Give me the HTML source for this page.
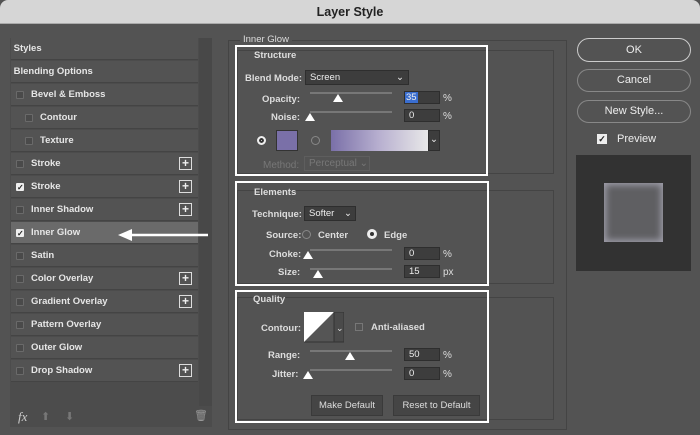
<!DOCTYPE html><html><head><style>
*{margin:0;padding:0;box-sizing:border-box}
body{width:700px;height:435px;background:#535353;font-family:"Liberation Sans",sans-serif;color:#e8e8e8;font-size:10px;position:relative;overflow:hidden}
.a{position:absolute}
.title{left:0;top:0;width:700px;height:24px;background:#d6d6d6;border-radius:8px 8px 0 0;color:#222;font-weight:bold;font-size:12.5px;text-align:center;line-height:24px;border-bottom:1px solid #aaa}
.list{left:10px;top:38px;width:202px;height:389px;background:#4c4c4c}
.item{position:absolute;left:1px;width:187px;height:22px;border-bottom:1px solid #444;background:#535353;line-height:22px;font-size:9.5px;font-weight:bold;color:#e6e6e6}
.cb{position:absolute;width:8px;height:8px;border:1px solid #6a6a6a;background:#4a4a4a;border-radius:1px;top:7px}
.cbc{background:#eee;border-color:#eee}
.cbc:after{content:"✓";position:absolute;left:0;top:-7px;font-size:8px;color:#222;font-weight:bold}
.plus{position:absolute;right:6px;top:4px;width:13px;height:13px;border:1px solid #ddd;color:#eee;font-size:12px;line-height:10px;text-align:center}
.grp{border:1px solid #444}
.wb{border:2px solid #fff}
.lbl{font-size:9.5px;color:#ddd;font-weight:bold}
.fld{background:#3d3d3d;border:1px solid #2e2e2e;color:#eee;font-size:9.5px;padding-left:4px;line-height:12px}
.trk{height:2px;background:#777}
.th{width:0;height:0;border-left:5px solid transparent;border-right:5px solid transparent;border-bottom:8px solid #fff}
.btn{border:1px solid #aaa;border-radius:12px;text-align:center;color:#eee;font-size:11px}
.pbtn{background:#454545;border:1px solid #3a3a3a;text-align:center;font-size:9.5px;color:#ddd;line-height:20px}
</style></head><body>
<div class="a title">Layer Style</div>
<div class="a list">
<div class="item" style="top:0">&nbsp;Styles</div>
<div class="item" style="top:23px">&nbsp;Blending Options</div>
<div class="item" style="top:46px"><span class="cb" style="left:5px"></span><span style="margin-left:20px">Bevel &amp; Emboss</span></div>
<div class="item" style="top:69px"><span class="cb" style="left:14px"></span><span style="margin-left:29px">Contour</span></div>
<div class="item" style="top:92px"><span class="cb" style="left:14px"></span><span style="margin-left:29px">Texture</span></div>
<div class="item" style="top:115px"><span class="cb" style="left:5px"></span><span style="margin-left:20px">Stroke</span><span class="plus">+</span></div>
<div class="item" style="top:138px"><span class="cb cbc" style="left:5px"></span><span style="margin-left:20px">Stroke</span><span class="plus">+</span></div>
<div class="item" style="top:161px"><span class="cb" style="left:5px"></span><span style="margin-left:20px">Inner Shadow</span><span class="plus">+</span></div>
<div class="item" style="top:184px;background:#6a6a6a"><span class="cb cbc" style="left:5px"></span><span style="margin-left:20px">Inner Glow</span></div>
<div class="item" style="top:207px"><span class="cb" style="left:5px"></span><span style="margin-left:20px">Satin</span></div>
<div class="item" style="top:230px"><span class="cb" style="left:5px"></span><span style="margin-left:20px">Color Overlay</span><span class="plus">+</span></div>
<div class="item" style="top:253px"><span class="cb" style="left:5px"></span><span style="margin-left:20px">Gradient Overlay</span><span class="plus">+</span></div>
<div class="item" style="top:276px"><span class="cb" style="left:5px"></span><span style="margin-left:20px">Pattern Overlay</span></div>
<div class="item" style="top:299px"><span class="cb" style="left:5px"></span><span style="margin-left:20px">Outer Glow</span></div>
<div class="item" style="top:322px"><span class="cb" style="left:5px"></span><span style="margin-left:20px">Drop Shadow</span><span class="plus">+</span></div>
<div class="a" style="left:189px;top:0;width:13px;height:368px;background:#484848"></div>
<div class="a" style="left:8px;top:371px;font-style:italic;font-family:'Liberation Serif',serif;font-size:13px;color:#ccc">fx</div>
<div class="a" style="left:31px;top:372px;color:#777;font-size:11px">⬆</div>
<div class="a" style="left:55px;top:372px;color:#777;font-size:11px">⬇</div>
<div class="a" style="left:184px;top:371px;color:#999;font-size:11px">🗑</div>
</div>
<svg class="a" style="left:118px;top:228px" width="92" height="14"><line x1="10" y1="7" x2="90" y2="7" stroke="#fff" stroke-width="2.5"/><polygon points="0,7 14,1 14,13" fill="#fff"/></svg>
<div class="a grp" style="left:228px;top:40px;width:339px;height:390px"></div>
<div class="a lbl" style="left:240px;top:34px;background:#535353;padding:0 3px;font-weight:normal">Inner Glow</div>
<div class="a grp" style="left:237px;top:50px;width:317px;height:124px"></div>
<div class="a grp" style="left:237px;top:190px;width:317px;height:94px"></div>
<div class="a grp" style="left:237px;top:297px;width:317px;height:123px"></div>
<div class="a wb" style="left:235px;top:45px;width:253px;height:131px"></div>
<div class="a wb" style="left:235px;top:181px;width:254px;height:105px"></div>
<div class="a wb" style="left:235px;top:290px;width:254px;height:133px"></div>
<div class="a lbl" style="left:254px;top:50px">Structure</div>
<div class="a lbl" style="left:245px;top:73px">Blend Mode:</div>
<div class="a fld" style="left:305px;top:70px;width:104px;height:15px;line-height:13px">Screen<span style="float:right;margin-right:4px">⌄</span></div>
<div class="a lbl" style="left:262px;top:94px">Opacity:</div>
<div class="a trk" style="left:310px;top:92px;width:82px"></div>
<div class="a th" style="left:333px;top:94px"></div>
<div class="a fld" style="left:404px;top:91px;width:36px;height:13px;padding-left:0"><span style="background:#3a6ed0;padding:0 1px">35</span></div>
<div class="a" style="left:443px;top:93px;color:#ddd">%</div>
<div class="a lbl" style="left:271px;top:112px">Noise:</div>
<div class="a trk" style="left:310px;top:111px;width:82px"></div>
<div class="a th" style="left:305px;top:113px"></div>
<div class="a fld" style="left:404px;top:109px;width:36px;height:13px">0</div>
<div class="a" style="left:443px;top:111px;color:#ddd">%</div>
<div class="a" style="left:257px;top:136px;width:9px;height:9px;border-radius:50%;background:#eee;border:2.5px solid #eee;box-shadow:inset 0 0 0 2px #333"></div>
<div class="a" style="left:276px;top:130px;width:22px;height:21px;background:#7a70a8;border:1px solid #333"></div>
<div class="a" style="left:311px;top:136px;width:9px;height:9px;border-radius:50%;border:1px solid #888"></div>
<div class="a" style="left:331px;top:130px;width:97px;height:21px;background:linear-gradient(90deg,#7a70a8,#b8b0d0 50%,#e8e8e8)"></div>
<div class="a fld" style="left:428px;top:130px;width:12px;height:21px;padding:0;text-align:center;line-height:17px">⌄</div>
<div class="a" style="left:263px;top:160px;color:#777">Method:</div>
<div class="a" style="left:304px;top:156px;width:66px;height:15px;border:1px solid #5e5e5e;color:#777;padding-left:4px;line-height:13px">Perceptual ⌄</div>
<div class="a lbl" style="left:254px;top:187px">Elements</div>
<div class="a lbl" style="left:252px;top:209px">Technique:</div>
<div class="a fld" style="left:304px;top:206px;width:52px;height:15px;line-height:13px">Softer <span style="float:right;margin-right:3px">⌄</span></div>
<div class="a lbl" style="left:266px;top:230px">Source:</div>
<div class="a" style="left:302px;top:230px;width:9px;height:9px;border-radius:50%;border:1px solid #888"></div>
<div class="a lbl" style="left:318px;top:230px">Center</div>
<div class="a" style="left:367px;top:229px;width:10px;height:10px;border-radius:50%;background:#333;border:3px solid #eee"></div>
<div class="a lbl" style="left:384px;top:230px">Edge</div>
<div class="a lbl" style="left:269px;top:249px">Choke:</div>
<div class="a trk" style="left:310px;top:249px;width:82px"></div>
<div class="a th" style="left:303px;top:251px"></div>
<div class="a fld" style="left:404px;top:247px;width:36px;height:13px">0</div>
<div class="a" style="left:443px;top:249px;color:#ddd">%</div>
<div class="a lbl" style="left:278px;top:267px">Size:</div>
<div class="a trk" style="left:310px;top:268px;width:82px"></div>
<div class="a th" style="left:313px;top:270px"></div>
<div class="a fld" style="left:404px;top:265px;width:36px;height:13px">15</div>
<div class="a" style="left:443px;top:267px;color:#ddd">px</div>
<div class="a lbl" style="left:253px;top:294px">Quality</div>
<div class="a lbl" style="left:261px;top:323px">Contour:</div>
<svg class="a" style="left:304px;top:312px" width="40" height="31"><rect x="0" y="0" width="30" height="30" fill="#555" stroke="#333"/><polygon points="0,0 30,0 0,30" fill="#fff"/><rect x="30" y="0" width="10" height="30" fill="#4a4a4a" stroke="#333"/><text x="32" y="19" fill="#ddd" font-size="9" font-family="Liberation Sans">⌄</text></svg>
<div class="a" style="left:355px;top:323px;width:8px;height:8px;border:1px solid #777"></div>
<div class="a lbl" style="left:371px;top:322px">Anti-aliased</div>
<div class="a lbl" style="left:268px;top:350px">Range:</div>
<div class="a trk" style="left:310px;top:350px;width:82px"></div>
<div class="a th" style="left:345px;top:352px"></div>
<div class="a fld" style="left:404px;top:348px;width:36px;height:13px">50</div>
<div class="a" style="left:443px;top:350px;color:#ddd">%</div>
<div class="a lbl" style="left:272px;top:369px">Jitter:</div>
<div class="a trk" style="left:310px;top:369px;width:82px"></div>
<div class="a th" style="left:303px;top:371px"></div>
<div class="a fld" style="left:404px;top:367px;width:36px;height:13px">0</div>
<div class="a" style="left:443px;top:369px;color:#ddd">%</div>
<div class="a pbtn" style="left:311px;top:395px;width:72px;height:21px">Make Default</div>
<div class="a pbtn" style="left:393px;top:395px;width:87px;height:21px">Reset to Default</div>
<div class="a btn" style="left:577px;top:38px;width:114px;height:24px;line-height:22px;border-color:#ccc;border-width:1.5px">OK</div>
<div class="a btn" style="left:577px;top:69px;width:114px;height:23px;line-height:21px;border-color:#888">Cancel</div>
<div class="a btn" style="left:577px;top:100px;width:114px;height:23px;line-height:21px;border-color:#888">New Style...</div>
<div class="a" style="left:597px;top:134px;width:10px;height:10px;background:#eee;color:#222;font-size:9px;font-weight:bold;line-height:10px;text-align:center">✓</div>
<div class="a" style="left:617px;top:133px;font-size:11px;color:#eee">Preview</div>
<div class="a" style="left:576px;top:155px;width:115px;height:116px;background:#323232"></div>
<div class="a" style="left:604px;top:183px;width:59px;height:59px;background:#5f5f62;box-shadow:inset 0 0 7px 2px #a09fab"></div>
</body></html>
